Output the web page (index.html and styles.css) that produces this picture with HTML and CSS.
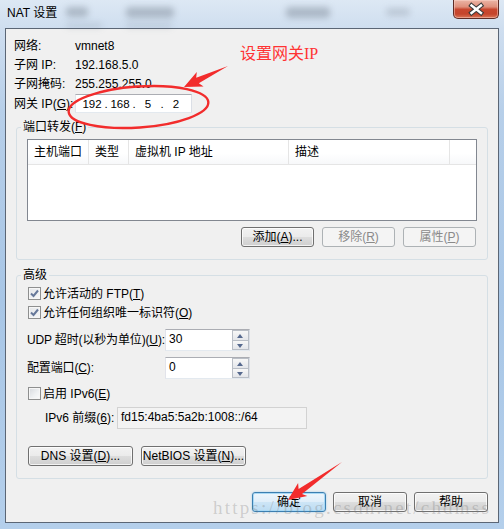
FILE: index.html
```html
<!DOCTYPE html>
<html lang="zh-CN">
<head>
<meta charset="utf-8">
<title>NAT 设置</title>
<link rel="stylesheet" href="styles.css">
</head>
<body>
<div class="window">
  <div class="titlebar">
    <span class="blob b1"></span><span class="blob b2"></span><span class="blob b3"></span><span class="blob b4"></span><span class="blob b5"></span><span class="blob b6"></span>
    <span class="title">NAT 设置</span>
    <div class="close">
      <svg width="46" height="19" viewBox="0 0 46 19">
        <path d="M18.5 5.5 L28 13 M28 5.5 L18.5 13" stroke="#3b3b3b" stroke-width="4.6" stroke-linecap="square" fill="none"/>
        <path d="M18.5 5.5 L28 13 M28 5.5 L18.5 13" stroke="#ffffff" stroke-width="2.4" stroke-linecap="square" fill="none"/>
      </svg>
    </div>
  </div>

  <div class="client">
    <div class="info">
      <span>网络:</span><span>vmnet8</span>
      <span>子网 IP:</span><span>192.168.5.0</span>
      <span>子网掩码:</span><span>255.255.255.0</span>
      <span class="tall">网关 IP(<u>G</u>):</span>
      <span class="tall"><span class="ipbox"><span class="f">192</span><span class="d">.</span><span class="f">168</span><span class="d">.</span><span class="f">5</span><span class="d">.</span><span class="f">2</span></span></span>
    </div>

    <fieldset class="group pf">
      <legend>端口转发(<u>F</u>)</legend>
      <div class="list">
        <div class="lhead">
          <span class="c1">主机端口</span><span class="c2">类型</span><span class="c3">虚拟机 IP 地址</span><span class="c4">描述</span><span class="c5"></span>
        </div>
      </div>
      <div class="btnrow">
        <button class="btn">添加(<u>A</u>)...</button>
        <button class="btn off">移除(<u>R</u>)</button>
        <button class="btn off">属性(<u>P</u>)</button>
      </div>
    </fieldset>

    <fieldset class="group adv">
      <legend>高级</legend>
      <div class="chk"><span class="cb on"><svg width="11" height="11" viewBox="0 0 11 11"><path d="M2 5.5 L4.5 8 L9 2.5" stroke="#66789a" stroke-width="2" fill="none"/></svg></span>允许活动的 FTP(<u>T</u>)</div>
      <div class="chk"><span class="cb on"><svg width="11" height="11" viewBox="0 0 11 11"><path d="M2 5.5 L4.5 8 L9 2.5" stroke="#66789a" stroke-width="2" fill="none"/></svg></span>允许任何组织唯一标识符(<u>O</u>)</div>
      <div class="spins">
        <span class="slabel">UDP 超时(以秒为单位)(<u>U</u>):</span>
        <span class="spin"><span class="stext">30</span><span class="sbtns"><span class="sb up"></span><span class="sb dn"></span></span></span>
        <span class="slabel">配置端口(<u>C</u>):</span>
        <span class="spin"><span class="stext">0</span><span class="sbtns"><span class="sb up"></span><span class="sb dn"></span></span></span>
      </div>
      <div class="chk ipv6"><span class="cb"></span>启用 IPv6(<u>E</u>)</div>
      <div class="prefixrow">
        <span class="plabel">IPv6 前缀(<u>6</u>):</span>
        <span class="prefix">fd15:4ba5:5a2b:1008::/64</span>
      </div>
      <div class="dnsrow">
        <button class="btn wide">DNS 设置(<u>D</u>)...</button>
        <button class="btn wide">NetBIOS 设置(<u>N</u>)...</button>
      </div>
    </fieldset>

    <div class="footer">
      <button class="btn fb def">确定</button>
      <button class="btn fb">取消</button>
      <button class="btn fb">帮助</button>
    </div>
  </div>

  <div class="note">设置网关IP</div>
  <div class="watermark">https://blog.csdn.net/chdmss</div>
  <svg class="marks" width="504" height="529" viewBox="0 0 504 529">
    <ellipse cx="138.5" cy="107" rx="70" ry="20.5" transform="rotate(-4 138.5 107)" fill="none" stroke="#f22c2c" stroke-width="2.4"/>
    <polygon points="184,87 203.6,86.5 198.8,83.2 228,66 196.2,77.8 196.8,72.1" fill="#f22c2c"/>
    <polygon points="288,500 307.3,496.1 302,493.9 342,462 298.6,488.9 298.1,483.1" fill="#f22c2c"/>
  </svg>
</div>
</body>
</html>
```

FILE: styles.css
```css
* { box-sizing: border-box; }

body {
  margin: 0;
  font-family: "Liberation Sans", "Noto Sans CJK SC", sans-serif;
  font-size: 12px;
  color: #000;
}

u { text-decoration: underline; text-underline-offset: 1px; }

.window {
  position: relative;
  width: 504px;
  height: 529px;
  overflow: hidden;
  display: flex;
  flex-direction: column;
  background: linear-gradient(to bottom, #dde8f4 0px, #cfdeef 28px, #b7cfe9 110px, #a8c6e6 300px, #b4cfeb 529px);
}

/* title bar */
.titlebar {
  position: relative;
  height: 28px;
  flex: none;
  display: flex;
  align-items: flex-start;
}
.title {
  position: relative;
  margin-left: 7px;
  line-height: 27px;
  font-size: 12px;
  color: #000;
}
.blob {
  position: absolute;
  background: rgba(95, 105, 120, 0.35);
  filter: blur(3px);
  border-radius: 4px;
}
.b1 { left: 66px; top: 7px; width: 22px; height: 10px; }
.b2 { left: 126px; top: 7px; width: 48px; height: 11px; }
.b3 { left: 286px; top: 7px; width: 44px; height: 11px; }
.b4 { left: 386px; top: 8px; width: 24px; height: 8px; background: rgba(95, 105, 120, 0.22); }
.b5 { left: 66px; top: 23px; width: 36px; height: 5px; background: rgba(95, 105, 120, 0.18); }
.b6 { left: 126px; top: 23px; width: 46px; height: 5px; background: rgba(95, 105, 120, 0.18); }

.close {
  position: relative;
  margin-left: auto;
  margin-right: 5px;
  width: 46px;
  height: 19px;
  border: 1px solid #5e2c26;
  border-top: none;
  border-radius: 0 0 5px 5px;
  background: linear-gradient(to bottom, #ebb5a6 0%, #df907c 38%, #c8472f 52%, #c5452c 78%, #db7658 100%);
  box-shadow: inset 0 0 0 1px rgba(255, 220, 210, 0.45);
}
.close svg { position: absolute; left: -1px; top: 0; }

/* client area */
.client {
  flex: none;
  margin: 0 5px;
  height: 495px;
  border: 1px solid #5b6675;
  background: #f0f0f0;
  padding: 0 10px;
  display: flex;
  flex-direction: column;
}

.info {
  margin-left: -2px;
  padding-top: 7px;
  display: grid;
  grid-template-columns: 61px 1fr;
  grid-template-rows: 19px 19px 19px 21px;
  align-items: center;
  line-height: 16px;
}
.tall { display: flex; align-items: center; }

.ipbox {
  display: flex;
  align-items: center;
  width: 117px;
  height: 19px;
  padding-left: 6px;
  background: #fff;
  border: 1px solid;
  border-color: #abadb3 #dbdfe6 #e3e9ef #e2e3ea;
  font-size: 11.5px;
}
.ipbox .f { width: 20px; text-align: center; }
.ipbox .d { width: 8px; text-align: center; }

/* group boxes */
.group {
  margin: 0;
  padding: 0 10px;
  min-width: 0;
  border: 1px solid #d5dfe5;
  border-radius: 3px;
}
.group legend {
  margin-left: -6px;
  padding: 0 2px;
  line-height: 16px;
  height: 16px;
}

.pf { margin-top: 5px; padding-top: 4px; padding-bottom: 12px; }

.list {
  height: 82px;
  border: 1px solid #828790;
  background: #fff;
}
.lhead {
  display: flex;
  height: 25px;
  border-bottom: 1px solid #e5e5e5;
  background: linear-gradient(to bottom, #ffffff 0%, #ffffff 55%, #f7f8fa 100%);
  line-height: 24px;
}
.lhead span {
  border-right: 1px solid #e5e5e5;
  padding-left: 6px;
  white-space: nowrap;
}
.lhead .c1 { width: 61px; }
.lhead .c2 { width: 40px; }
.lhead .c3 { width: 160px; }
.lhead .c4 { width: 161px; }
.lhead .c5 { flex: 1; border-right: none; }

.btnrow {
  margin-top: 6px;
  display: flex;
  justify-content: flex-end;
  gap: 8px;
  padding-right: 1px;
}

.btn {
  height: 20px;
  width: 73px;
  padding: 0;
  font: inherit;
  line-height: 16px;
  color: #000;
  white-space: nowrap;
  border: 1px solid #707070;
  border-radius: 3px;
  background: linear-gradient(to bottom, #f2f2f2 0%, #ebebeb 48%, #dddddd 52%, #cfcfcf 100%);
  box-shadow: inset 0 0 0 1px rgba(255, 255, 255, 0.75);
}
.btn.off {
  color: #8a8a8a;
  border-color: #adb2b5;
  background: #f4f4f4;
  box-shadow: none;
}

/* advanced group */
.adv { margin-top: 7px; padding-top: 1px; padding-bottom: 12px; }

.chk {
  height: 19px;
  display: flex;
  align-items: center;
  line-height: 16px;
}
.cb {
  width: 13px;
  height: 13px;
  margin-left: 1px;
  margin-right: 2px;
  border: 1px solid #8e8f8f;
  background: linear-gradient(135deg, #d6d9dd 0%, #eef0f2 55%, #fcfcfc 100%);
  box-shadow: inset 0 0 0 1px #f6f6f6;
  display: flex;
  align-items: center;
  justify-content: center;
}
.cb.on { background: linear-gradient(135deg, #e4e6e9 0%, #f6f7f8 100%); }

.spins {
  margin-top: 7px;
  display: grid;
  grid-template-columns: 138px 85px;
  grid-auto-rows: 22px;
  row-gap: 6px;
  align-items: center;
  line-height: 16px;
}
.slabel { white-space: nowrap; letter-spacing: -0.15px; }
.spin {
  height: 22px;
  display: flex;
  background: #fff;
  border: 1px solid;
  border-color: #abadb3 #dbdfe6 #e3e9ef #e2e3ea;
}
.stext { flex: 1; padding: 1px 0 0 3px; line-height: 16px; }
.sbtns {
  width: 17px;
  display: flex;
  flex-direction: column;
}
.sb {
  flex: 1;
  position: relative;
  border: 1px solid #b9bec6;
  background: linear-gradient(to bottom, #f7f7f7, #e4e6ea);
}
.sb.up { border-bottom-width: 0; }
.sb::after {
  content: "";
  position: absolute;
  left: 4px;
  top: 3px;
  border-left: 3.5px solid transparent;
  border-right: 3.5px solid transparent;
}
.sb.up::after { border-bottom: 4px solid #56698e; }
.sb.dn::after { border-top: 4px solid #56698e; top: 3px; }

.ipv6 { margin-top: 5px; }

.prefixrow {
  margin-top: 4px;
  display: flex;
  align-items: center;
  padding-left: 18px;
  line-height: 16px;
}
.plabel { width: 72px; white-space: nowrap; }
.prefix {
  width: 190px;
  height: 22px;
  padding: 1px 3px;
  background: #f3f3f3;
  border: 1px solid #d2d2d2;
}

.dnsrow {
  margin-top: 17px;
  margin-left: 1px;
  display: flex;
  gap: 8px;
}
.btn.wide { width: 105px; }

/* footer */
.footer {
  margin-top: 13px;
  display: flex;
  justify-content: flex-end;
  gap: 7px;
}
.btn.fb { width: 74px; }
.btn.def {
  border-color: #3c7fb1;
  background: linear-gradient(to bottom, #eef6fc 0%, #e0eef9 48%, #cde5f6 52%, #bcdcf2 100%);
  box-shadow: inset 0 0 0 1px #a9d9f5, 0 0 2px rgba(60, 160, 230, 0.5);
}

/* annotations */
.note {
  position: absolute;
  left: 240px;
  top: 44px;
  font-family: "Liberation Serif", "Noto Sans CJK SC", serif;
  font-size: 16px;
  line-height: 20px;
  color: #f33;
}
.watermark {
  position: absolute;
  left: 213px;
  top: 497px;
  font-family: "Liberation Serif", serif;
  font-size: 19px;
  letter-spacing: 2.2px;
  line-height: 22px;
  color: rgba(120, 120, 120, 0.3);
  white-space: nowrap;
}
.marks {
  position: absolute;
  left: 0;
  top: 0;
  pointer-events: none;
}
```
